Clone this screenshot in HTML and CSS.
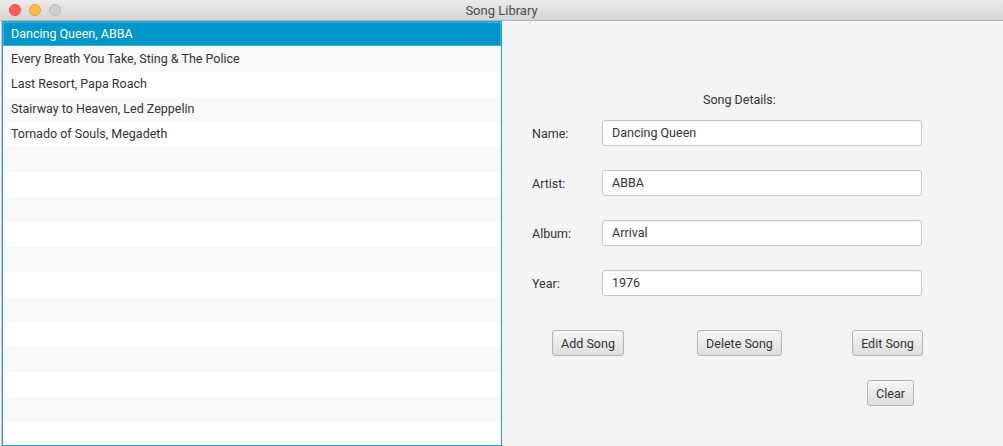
FILE: index.html
```html
<!DOCTYPE html>
<html>
<head>
<meta charset="utf-8">
<link rel="stylesheet" href="styles.css">
</head>
<body>
<div class="window">
  <div class="titlebar">
    <div class="lights">
      <span class="light close"></span>
      <span class="light min"></span>
      <span class="light max"></span>
    </div>
    <div class="title">Song Library</div>
  </div>
  <div class="content">
    <div class="list">
      <div class="row selected">Dancing Queen, ABBA</div>
      <div class="row">Every Breath You Take, Sting &amp; The Police</div>
      <div class="row">Last Resort, Papa Roach</div>
      <div class="row">Stairway to Heaven, Led Zeppelin</div>
      <div class="row">Tornado of Souls, Megadeth</div>
      <div class="row"></div>
      <div class="row"></div>
      <div class="row"></div>
      <div class="row"></div>
      <div class="row"></div>
      <div class="row"></div>
      <div class="row"></div>
      <div class="row"></div>
      <div class="row"></div>
      <div class="row"></div>
      <div class="row"></div>
      <div class="row"></div>
    </div>
    <div class="details">
      <div class="heading">Song Details:</div>
      <div class="form">
        <div class="field"><label>Name:</label><div class="input">Dancing Queen</div></div>
        <div class="field"><label>Artist:</label><div class="input">ABBA</div></div>
        <div class="field"><label>Album:</label><div class="input">Arrival</div></div>
        <div class="field"><label>Year:</label><div class="input">1976</div></div>
      </div>
      <div class="buttons">
        <button class="btn add">Add Song</button>
        <button class="btn del">Delete Song</button>
        <button class="btn edit">Edit Song</button>
      </div>
      <div class="buttons2">
        <button class="btn clear">Clear</button>
      </div>
    </div>
  </div>
</div>
</body>
</html>
```

FILE: styles.css
```css
html, body {
  margin: 0;
  padding: 0;
  width: 1003px;
  height: 446px;
  overflow: hidden;
  background: #f4f4f4;
  font-family: "Roboto", "Liberation Sans", sans-serif;
  font-size: 12.5px;
  color: #333;
}
.window {
  display: flex;
  flex-direction: column;
  height: 446px;
}
.titlebar {
  flex-shrink: 0;
  height: 20px;
  border-bottom: 1px solid #b4b4b4;
  background: linear-gradient(#ebebeb, #d4d4d4);
  display: flex;
  align-items: center;
  position: relative;
}
.lights {
  display: flex;
  gap: 8px;
  padding-left: 9px;
}
.light {
  width: 12px;
  height: 12px;
  border-radius: 50%;
  box-sizing: border-box;
}
.close { background: #fc605c; border: 1px solid #de4a44; }
.min { background: #fdbc40; border: 1px solid #dea032; }
.max { background: #d0d0d0; border: 1px solid #b8b8b8; }
.title {
  position: absolute;
  left: 0;
  right: 0;
  top: 0;
  height: 20px;
  line-height: 21px;
  text-align: center;
  color: #4d4d4d;
  font-size: 13px;
}
.content {
  flex: 1;
  min-height: 0;
  display: flex;
  overflow: hidden;
}
.list {
  margin-left: 2px;
  width: 498px;
  border: 1px solid #1e9fd4;
  background: #fff;
  overflow: hidden;
  box-shadow: -1px 0 0 #c8c8c8;
}
.row {
  height: 25px;
  line-height: 24px;
  padding-left: 8px;
  color: #333;
  white-space: nowrap;
}
.row:nth-child(even) {
  background: #f9f9f9;
}
.row.selected {
  background: #0096c9;
  color: #fff;
  box-shadow: inset 0 0 0 1px #3fb0dc;
  height: 24px;
  margin-bottom: 1px;
}
.details {
  flex: 1;
  display: flex;
  flex-direction: column;
  padding-top: 72px;
}
.heading {
  padding-left: 201px;
  height: 14px;
  line-height: 14px;
}
.form {
  display: flex;
  flex-direction: column;
  gap: 24px;
  padding-left: 30px;
  margin-top: 13px;
}
.field {
  display: flex;
  align-items: center;
  height: 26px;
}
.field label {
  width: 70px;
}
.input {
  width: 309px;
  height: 24px;
  line-height: 24px;
  background: #fff;
  border: 1px solid #c6c6c6;
  border-radius: 3px;
  padding-left: 9px;
  box-sizing: content-box;
  color: #333;
  box-shadow: inset 0 1px 1px rgba(0,0,0,0.04);
}
.buttons {
  display: flex;
  padding-left: 50px;
  margin-top: 34px;
  height: 26px;
}
.btn {
  font-family: inherit;
  font-size: 12.5px;
  color: #333;
  height: 26px;
  padding: 0;
  border: 1px solid #b3b3b3;
  border-radius: 3px;
  background: linear-gradient(#f6f6f6, #dedede);
  box-sizing: border-box;
}
.add { width: 72px; }
.del { width: 85px; margin-left: 73px; }
.edit { width: 71px; margin-left: 70px; }
.buttons2 {
  display: flex;
  padding-left: 365px;
  margin-top: 24px;
}
.clear { width: 47px; }
```
